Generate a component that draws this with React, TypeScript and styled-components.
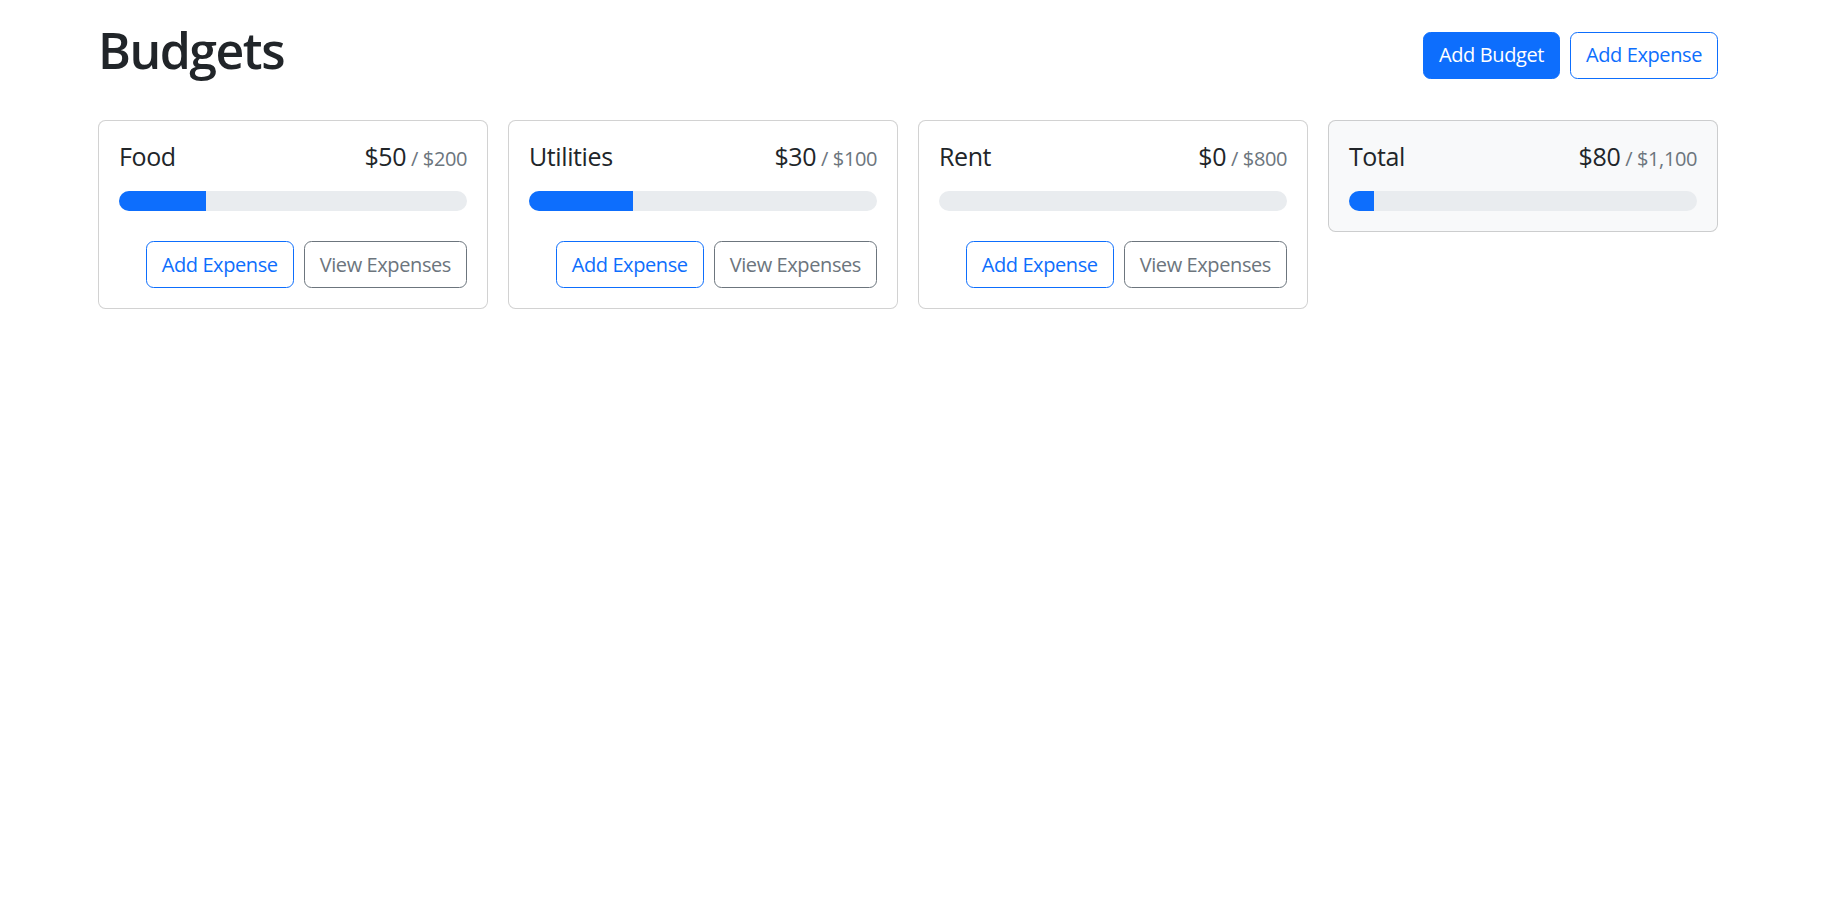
import React from 'react';
import styled, { createGlobalStyle } from 'styled-components';

const GlobalStyle = createGlobalStyle`
  *, *::before, *::after {
    box-sizing: border-box;
  }
  body {
    margin: 0;
    background: #fff;
    color: #212529;
    font-family: "Open Sans", "Noto Sans", "Liberation Sans", sans-serif;
    font-size: 20px;
    line-height: 1.5;
    letter-spacing: -0.02em;
  }
`;

type Budget = { name: string; amount: number; max: number };

const budgets: Budget[] = [
  { name: 'Food', amount: 50, max: 200 },
  { name: 'Utilities', amount: 30, max: 100 },
  { name: 'Rent', amount: 0, max: 800 },
];

const money = (n: number) => '$' + n.toLocaleString('en-US');

export default function App() {
  const total = budgets.reduce((s, b) => s + b.amount, 0);
  const totalMax = budgets.reduce((s, b) => s + b.max, 0);

  return (
    <>
      <GlobalStyle />
      <Container>
        <Header>
          <Title>Budgets</Title>
          <Button $variant="primary">Add Budget</Button>
          <Button $variant="outline-primary">Add Expense</Button>
        </Header>
        <Grid>
          {budgets.map((b) => (
            <BudgetCard key={b.name} {...b} />
          ))}
          <BudgetCard name="Total" amount={total} max={totalMax} light hideButtons />
        </Grid>
      </Container>
    </>
  );
}

function BudgetCard({
  name,
  amount,
  max,
  light,
  hideButtons,
}: Budget & { light?: boolean; hideButtons?: boolean }) {
  return (
    <Card $light={light}>
      <CardTitle>
        <div>{name}</div>
        <Amount>
          {money(amount)}
          <Muted>/ {money(max)}</Muted>
        </Amount>
      </CardTitle>
      <Progress>
        <ProgressBar style={{ width: `${(amount / max) * 100}%` }} />
      </Progress>
      {!hideButtons && (
        <Actions>
          <Button $variant="outline-primary">Add Expense</Button>
          <Button $variant="outline-secondary">View Expenses</Button>
        </Actions>
      )}
    </Card>
  );
}

const Container = styled.div`
  width: 1620px;
  margin: 20px 0 0 98px;
`;

const Header = styled.div`
  display: flex;
  align-items: center;
  gap: 10px;
  margin-bottom: 30px;
`;

const Title = styled.h1`
  margin: 0 auto 10px 0;
  font-size: 50px;
  font-weight: 600;
  line-height: 1.2;
  letter-spacing: -0.03em;
`;

const Grid = styled.div`
  display: grid;
  grid-template-columns: repeat(4, 1fr);
  gap: 20px;
  align-items: flex-start;
`;

const Card = styled.div<{ $light?: boolean }>`
  border: 1px solid rgba(0, 0, 0, 0.175);
  border-radius: 7.5px;
  padding: 20px;
  background: ${(p) => (p.$light ? '#f8f9fa' : '#fff')};
`;

const CardTitle = styled.div`
  display: flex;
  justify-content: space-between;
  align-items: baseline;
  font-size: 25px;
  line-height: 1.2;
  margin-bottom: 20px;
`;

const Amount = styled.div`
  display: flex;
  align-items: baseline;
`;

const Muted = styled.span`
  color: #6c757d;
  font-size: 20px;
  margin-left: 5px;
`;

const Progress = styled.div`
  height: 20px;
  border-radius: 999px;
  background: #e9ecef;
  overflow: hidden;
  display: flex;
`;

const ProgressBar = styled.div`
  background: #0d6efd;
  height: 100%;
`;

const Actions = styled.div`
  display: flex;
  justify-content: flex-end;
  gap: 10px;
  margin-top: 30px;
`;

const variants = {
  primary: { color: '#fff', bg: '#0d6efd', border: '#0d6efd' },
  'outline-primary': { color: '#0d6efd', bg: 'transparent', border: '#0d6efd' },
  'outline-secondary': { color: '#6c757d', bg: 'transparent', border: '#6c757d' },
};

const Button = styled.button<{ $variant: keyof typeof variants }>`
  font-family: inherit;
  font-size: 20px;
  line-height: 1.5;
  letter-spacing: inherit;
  padding: 7.5px 15px;
  border-radius: 7.5px;
  border: 1px solid ${(p) => variants[p.$variant].border};
  color: ${(p) => variants[p.$variant].color};
  background: ${(p) => variants[p.$variant].bg};
  cursor: pointer;
`;
